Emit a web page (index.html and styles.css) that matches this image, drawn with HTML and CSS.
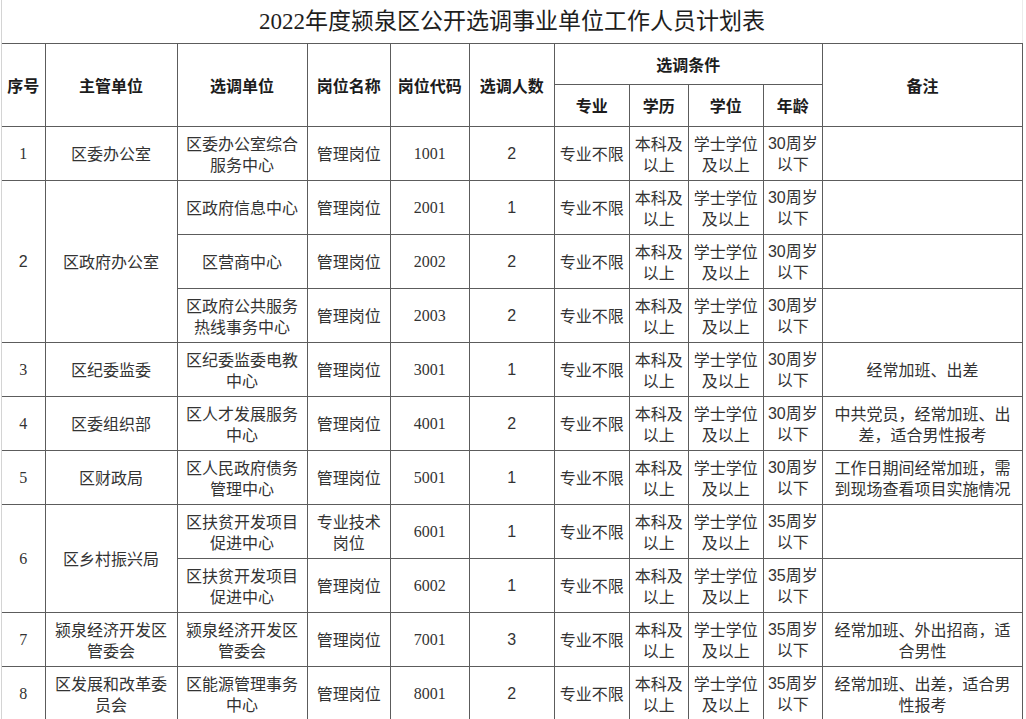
FILE: index.html
```html
<!DOCTYPE html>
<html lang="zh-CN">
<head>
<meta charset="utf-8">
<title>2022年度颍泉区公开选调事业单位工作人员计划表</title>
<link rel="stylesheet" href="styles.css">
</head>
<body>
<div class="sheet">
  <div class="title">2022年度颍泉区公开选调事业单位工作人员计划表</div>
  <table class="plan">
    <colgroup>
      <col class="c-no"><col class="c-dept"><col class="c-unit"><col class="c-post"><col class="c-code"><col class="c-num">
      <col class="c-major"><col class="c-edu"><col class="c-deg"><col class="c-age"><col class="c-note">
    </colgroup>
    <thead>
      <tr class="h1">
        <th rowspan="2">序号</th>
        <th rowspan="2">主管单位</th>
        <th rowspan="2">选调单位</th>
        <th rowspan="2">岗位名称</th>
        <th rowspan="2">岗位代码</th>
        <th rowspan="2">选调人数</th>
        <th colspan="4">选调条件</th>
        <th rowspan="2">备注</th>
      </tr>
      <tr class="h2">
        <th>专业</th><th>学历</th><th>学位</th><th>年龄</th>
      </tr>
    </thead>
    <tbody>
      <tr>
        <td class="serif">1</td><td>区委办公室</td><td>区委办公室综合服务中心</td><td>管理岗位</td><td class="serif">1001</td><td class="sans">2</td>
        <td>专业不限</td><td>本科及以上</td><td>学士学位及以上</td><td class="sans">30周岁以下</td><td class="note"></td>
      </tr>
      <tr>
        <td class="sans" rowspan="3">2</td><td rowspan="3">区政府办公室</td><td>区政府信息中心</td><td>管理岗位</td><td class="serif">2001</td><td class="sans">1</td>
        <td>专业不限</td><td>本科及以上</td><td>学士学位及以上</td><td class="sans">30周岁以下</td><td class="note"></td>
      </tr>
      <tr>
        <td>区营商中心</td><td>管理岗位</td><td class="serif">2002</td><td class="sans">2</td>
        <td>专业不限</td><td>本科及以上</td><td>学士学位及以上</td><td class="sans">30周岁以下</td><td class="note"></td>
      </tr>
      <tr>
        <td>区政府公共服务热线事务中心</td><td>管理岗位</td><td class="serif">2003</td><td class="sans">2</td>
        <td>专业不限</td><td>本科及以上</td><td>学士学位及以上</td><td class="sans">30周岁以下</td><td class="note"></td>
      </tr>
      <tr>
        <td class="serif">3</td><td>区纪委监委</td><td>区纪委监委电教中心</td><td>管理岗位</td><td class="serif">3001</td><td class="sans">1</td>
        <td>专业不限</td><td>本科及以上</td><td>学士学位及以上</td><td class="sans">30周岁以下</td><td class="note">经常加班、出差</td>
      </tr>
      <tr>
        <td class="serif">4</td><td>区委组织部</td><td>区人才发展服务中心</td><td>管理岗位</td><td class="serif">4001</td><td class="sans">2</td>
        <td>专业不限</td><td>本科及以上</td><td>学士学位及以上</td><td class="sans">30周岁以下</td><td class="note">中共党员，经常加班、出差，适合男性报考</td>
      </tr>
      <tr>
        <td class="serif">5</td><td>区财政局</td><td>区人民政府债务管理中心</td><td>管理岗位</td><td class="serif">5001</td><td class="sans">1</td>
        <td>专业不限</td><td>本科及以上</td><td>学士学位及以上</td><td class="sans">30周岁以下</td><td class="note">工作日期间经常加班，需到现场查看项目实施情况</td>
      </tr>
      <tr>
        <td class="serif" rowspan="2">6</td><td rowspan="2">区乡村振兴局</td><td>区扶贫开发项目促进中心</td><td>专业技术岗位</td><td class="serif">6001</td><td class="sans">1</td>
        <td>专业不限</td><td>本科及以上</td><td>学士学位及以上</td><td class="sans">35周岁以下</td><td class="note"></td>
      </tr>
      <tr>
        <td>区扶贫开发项目促进中心</td><td>管理岗位</td><td class="serif">6002</td><td class="sans">1</td>
        <td>专业不限</td><td>本科及以上</td><td>学士学位及以上</td><td class="sans">35周岁以下</td><td class="note"></td>
      </tr>
      <tr>
        <td class="serif">7</td><td>颍泉经济开发区管委会</td><td>颍泉经济开发区管委会</td><td>管理岗位</td><td class="serif">7001</td><td class="sans">3</td>
        <td>专业不限</td><td>本科及以上</td><td>学士学位及以上</td><td class="sans">35周岁以下</td><td class="note">经常加班、外出招商，适合男性</td>
      </tr>
      <tr>
        <td class="serif">8</td><td>区发展和改革委员会</td><td>区能源管理事务中心</td><td>管理岗位</td><td class="serif">8001</td><td class="sans">2</td>
        <td>专业不限</td><td>本科及以上</td><td>学士学位及以上</td><td class="sans">35周岁以下</td><td class="note">经常加班、出差，适合男性报考</td>
      </tr>
    </tbody>
  </table>
</div>
</body>
</html>
```

FILE: styles.css
```css
html, body {
  margin: 0;
  padding: 0;
  background: #ffffff;
}

body {
  font-family: "Noto Sans CJK SC", sans-serif;
  color: #333333;
}

.sheet {
  width: 1023px;
  margin-left: 1px;
  border-left: 1px solid #d4d4d4;
  box-sizing: border-box;
}

.title {
  height: 43px;
  line-height: 43px;
  text-align: center;
  font-family: "Liberation Serif", "Noto Sans CJK SC", serif;
  font-size: 23px;
  color: #1e1e1e;
  border-right: 1px solid #ececec;
  margin-right: 1px;
}

.plan {
  border-collapse: collapse;
  table-layout: fixed;
  width: 1021px;
  border-left-style: hidden;
}

.plan th,
.plan td {
  border: 1px solid #5c5c5c;
  text-align: center;
  vertical-align: middle;
  padding: 0 3px;
  font-size: 16px;
  line-height: 21px;
}

.plan th {
  font-weight: bold;
  color: #1c1c1c;
}

.h1 th { height: 40px; }
.h2 th { height: 41px; }
.plan tbody td { height: 53px; }

.plan td.note { padding: 0 8px; }

.serif { font-family: "Liberation Serif", "Noto Sans CJK SC", serif; }
.sans { font-family: "Liberation Sans", "Noto Sans CJK SC", sans-serif; }

.c-no { width: 43px; }
.c-dept { width: 132px; }
.c-unit { width: 130px; }
.c-post { width: 83px; }
.c-code { width: 79px; }
.c-num { width: 85px; }
.c-major { width: 75px; }
.c-edu { width: 59px; }
.c-deg { width: 75px; }
.c-age { width: 59px; }
.c-note { width: 200px; }
```
